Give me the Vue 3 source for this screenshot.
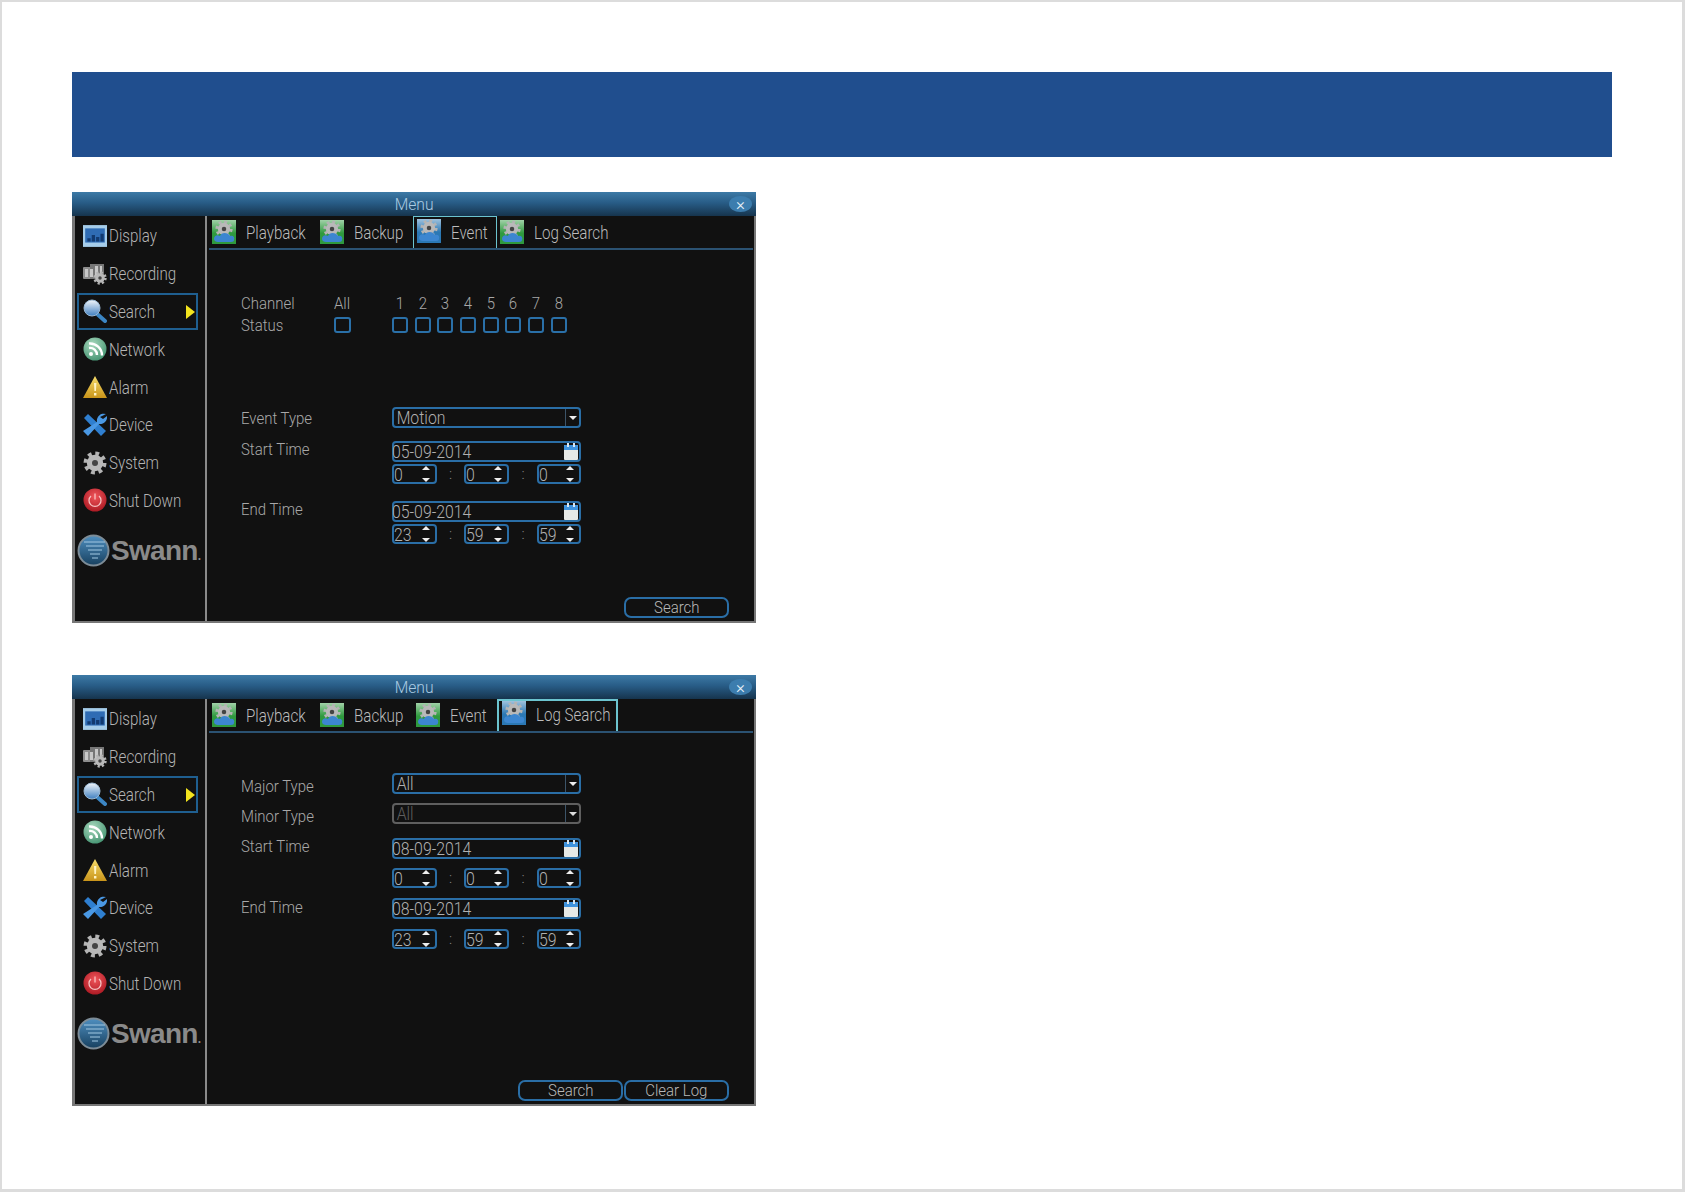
<template>
  <div class="page">
    <!-- shared icons -->
    <svg class="defs" width="0" height="0">
      <defs>
        <linearGradient id="g-lens" x1="0" y1="0" x2="0" y2="1"><stop offset="0" stop-color="#f2f6fa" /><stop offset="1" stop-color="#3f7fc0" /></linearGradient>
        <linearGradient id="g-warn" x1="0" y1="0" x2="0" y2="1"><stop offset="0" stop-color="#f6dc6a" /><stop offset="1" stop-color="#c9941a" /></linearGradient>
        <radialGradient id="g-red" cx="0.5" cy="0.35" r="0.7"><stop offset="0" stop-color="#f0555a" /><stop offset="1" stop-color="#a81620" /></radialGradient>
        <radialGradient id="g-green" cx="0.4" cy="0.3" r="0.8"><stop offset="0" stop-color="#a8d8bd" /><stop offset="1" stop-color="#3d8f6c" /></radialGradient>
        <linearGradient id="g-swann" x1="0" y1="0" x2="0" y2="1"><stop offset="0" stop-color="#4f8fc0" /><stop offset="1" stop-color="#17405f" /></linearGradient>
        <linearGradient id="g-shade" x1="0" y1="0" x2="0" y2="1"><stop offset="0" stop-color="#fff" stop-opacity="0.55" /><stop offset="0.55" stop-color="#fff" stop-opacity="0" /></linearGradient>
      </defs>
      <symbol id="ic-gear" viewBox="0 0 24 24">
        <circle cx="12" cy="12" r="9" fill="none" stroke="#b4b4b4" stroke-width="5" stroke-dasharray="3.6 3.47" />
        <circle cx="12" cy="12" r="8.200" fill="#b9b9b9" />
        <circle cx="12" cy="12" r="3" fill="#444" />
      </symbol>
      <symbol id="ic-tab" viewBox="0 0 24 24">
        <rect width="24" height="24" fill="currentColor" />
        <rect width="24" height="24" fill="url(#g-shade)" />
        <use href="#ic-gear" x="3" y="0" width="18" height="18" />
        <path d="M2 19c0-3 3-5 6-3 1-4 8-4 10 0 3-1 5 1 4 4 0 1-1 2-3 2H6c-2 0-4-1-4-3z" fill="#3c86d0" />
      </symbol>
      <symbol id="ic-display" viewBox="0 0 22 20">
        <rect width="22" height="20" fill="#a6cdea" />
        <rect x="2" y="3" width="18" height="13" fill="#2f6cb4" />
        <path d="M4 15v-3h3v3zM8 15v-6h3v6zM12 15v-4h3v4zM16 15V8h3v7z" fill="#123a70" />
      </symbol>
      <symbol id="ic-recording" viewBox="0 0 24 22">
        <rect y="4" width="17" height="12" rx="1" fill="#8d8d8d" />
        <rect x="7" y="1" width="14" height="15" fill="#777" />
        <path d="M2 6h3v8H2zM7 6h3v8H7zM12 3h3v11h-3zM17 3h2v10h-2z" fill="#c8c8c8" />
        <use href="#ic-gear" x="10" y="8" width="14" height="14" />
      </symbol>
      <symbol id="ic-search" viewBox="0 0 24 24">
        <path d="M13 14l9 8" stroke="#3c86c4" stroke-width="4" stroke-linecap="round" />
        <circle cx="9" cy="9" r="8" fill="url(#g-lens)" stroke="#9bb9d4" />
      </symbol>
      <symbol id="ic-network" viewBox="0 0 24 24">
        <circle cx="12" cy="12" r="11.500" fill="url(#g-green)" />
        <circle cx="8" cy="17" r="2" fill="#fff" />
        <path d="M6 11a7 7 0 0 1 8 7M6 6.500a12 12 0 0 1 13 12" fill="none" stroke="#fff" stroke-width="2.400" />
      </symbol>
      <symbol id="ic-alarm" viewBox="0 0 24 22">
        <path d="M12 0L24 22H0z" fill="url(#g-warn)" />
        <path d="M11 7h2.400l-.4 8h-1.600zM11 17h2.400v2.400H11z" fill="#fff3c4" />
      </symbol>
      <symbol id="ic-device" viewBox="0 0 24 24">
        <path d="M1 5l4-4 18 17-5 5z" fill="#2f7fd0" />
        <path d="M23 1a7 7 0 0 0-9 8L0 18l5 5 11-12a7 7 0 0 0 8-8l-4 3-3-2z" fill="#4a98e4" />
      </symbol>
      <symbol id="ic-power" viewBox="0 0 24 24">
        <circle cx="12" cy="12" r="11.500" fill="url(#g-red)" />
        <path d="M8 8a6 6 0 1 0 8 0M12 5.500v6" fill="none" stroke="#f7c1c1" stroke-width="1.300" />
      </symbol>
      <symbol id="ic-swann" viewBox="0 0 33 33">
        <circle cx="16.500" cy="16.500" r="15" fill="url(#g-swann)" stroke="#7d8c97" stroke-width="2" />
        <path d="M7 8h21M9 12h18M11 16h14M13 20h10M15 24h6" stroke="#9cc4de" stroke-width="1.500" opacity="0.7" />
      </symbol>
      <symbol id="ic-cal" viewBox="0 0 14 17">
        <rect y="2" width="14" height="15" rx="1" fill="#e6e9e6" />
        <path d="M0 3a1 1 0 0 1 1-1h12a1 1 0 0 1 1 1v4H0z" fill="#3f93dd" />
        <path d="M3 0h2v4H3zM9 0h2v4H9z" fill="#d9e6f0" />
      </symbol>
    </svg>

    <div class="banner"></div>

    <section v-for="panel in panels" :key="panel.active" class="panel">
      <header class="titlebar">
        <span class="title">Menu</span>
        <span class="close">×</span>
      </header>
      <div class="body">
        <aside class="sidebar">
          <div v-for="item in menu" :key="item.name" class="menu-item" :class="{ current: item.name === 'Search' }">
            <svg class="menu-icon"><use :href="'#ic-' + item.icon" /></svg>
            <span>{{ item.name }}</span>
            <i v-if="item.name === 'Search'" class="pointer"></i>
          </div>
          <div class="logo">
            <svg class="logo-mark"><use href="#ic-swann" /></svg>
            <span>Swann<small>.</small></span>
          </div>
        </aside>

        <main class="content">
          <nav class="tabs">
            <div v-for="tab in tabs" :key="tab" class="tab" :class="{ active: tab === panel.active, wide: tab === panel.active && tab === 'Log Search' }">
              <svg class="tab-icon"><use href="#ic-tab" /></svg>
              <span>{{ tab }}</span>
            </div>
          </nav>

          <div v-if="panel.channels" class="channels">
            <span>Channel</span><span>All</span><span></span>
            <span v-for="n in 8" :key="n" class="num">{{ n }}</span>
            <span>Status</span><i class="check"></i><span></span>
            <i v-for="n in 8" :key="n" class="check"></i>
          </div>

          <div class="form" :class="{ 'form-log': !panel.channels }">
            <div v-for="(row, i) in panel.rows" :key="i" class="row" :class="row.kind" :style="{ marginTop: row.gap + 'px' }">
              <label v-if="row.label" :style="{ top: (row.nudge || 0) + 'px' }">{{ row.label }}</label>

              <div v-if="row.kind === 'select'" class="field select" :class="{ disabled: row.disabled }">
                <span>{{ row.value }}</span>
                <b class="drop"><i class="tri-down"></i></b>
              </div>

              <div v-else-if="row.kind === 'date'" class="field date">
                <span>{{ row.value }}</span>
                <svg class="cal"><use href="#ic-cal" /></svg>
              </div>

              <div v-else class="clock">
                <template v-for="(v, j) in row.value" :key="j">
                  <span v-if="j" class="colon">:</span>
                  <div class="field spin">
                    <span>{{ v }}</span>
                    <b class="arrows"><i class="tri-up"></i><i class="tri-down"></i></b>
                  </div>
                </template>
              </div>
            </div>
          </div>

          <footer class="actions">
            <button v-for="b in panel.buttons" :key="b"><span>{{ b }}</span></button>
          </footer>
        </main>
      </div>
    </section>

    <i class="edge-mark m1"></i>
    <i class="edge-mark m2"></i>
  </div>
</template>

<script setup>
const menu = [
  { name: 'Display', icon: 'display' },
  { name: 'Recording', icon: 'recording' },
  { name: 'Search', icon: 'search' },
  { name: 'Network', icon: 'network' },
  { name: 'Alarm', icon: 'alarm' },
  { name: 'Device', icon: 'device' },
  { name: 'System', icon: 'gear' },
  { name: 'Shut Down', icon: 'power' },
]

const tabs = ['Playback', 'Backup', 'Event', 'Log Search']

const panels = [
  {
    active: 'Event',
    channels: true,
    buttons: ['Search'],
    rows: [
      { label: 'Event Type', kind: 'select', value: 'Motion', gap: 0 },
      { label: 'Start Time', kind: 'date', value: '05-09-2014', gap: 13, nudge: -3 },
      { kind: 'time', value: ['0', '0', '0'], gap: 2 },
      { label: 'End Time', kind: 'date', value: '05-09-2014', gap: 17, nudge: -3 },
      { kind: 'time', value: ['23', '59', '59'], gap: 2 },
    ],
  },
  {
    active: 'Log Search',
    channels: false,
    buttons: ['Search', 'Clear Log'],
    rows: [
      { label: 'Major Type', kind: 'select', value: 'All', gap: 0, nudge: 2 },
      { label: 'Minor Type', kind: 'select', value: 'All', gap: 9, disabled: true, nudge: 2 },
      { label: 'Start Time', kind: 'date', value: '08-09-2014', gap: 14, nudge: -3 },
      { kind: 'time', value: ['0', '0', '0'], gap: 9 },
      { label: 'End Time', kind: 'date', value: '08-09-2014', gap: 10, nudge: -2 },
      { kind: 'time', value: ['23', '59', '59'], gap: 10 },
    ],
  },
]
</script>

<style>
html, body { margin: 0; background: #fff; }
</style>

<style scoped>
.page {
  position: relative;
  box-sizing: border-box;
  width: 1685px;
  height: 1192px;
  padding: 70px 70px 0;
  border-style: solid;
  border-color: #dcdcdc;
  border-width: 2px 3px 3px 2px;
  background: #fff;
  overflow: hidden;
  font-family: Roboto, "Liberation Sans", sans-serif;
  font-weight: 300;
}
.defs { position: absolute; }

.banner {
  width: 1540px;
  height: 85px;
  background: #204e8e;
  margin-bottom: 35px;
}

.panel {
  width: 684px;
  height: 431px;
  margin-bottom: 52px;
  display: flex;
  flex-direction: column;
  background: #111;
}
.titlebar {
  flex: 0 0 24px;
  position: relative;
  display: flex;
  align-items: center;
  justify-content: center;
  background: linear-gradient(#3d7aa6, #285c86 45%, #16344d);
}
.title { color: #a9cbe2; font-size: 17px; transform: scaleX(0.92); }
.close {
  position: absolute;
  right: 4px;
  top: 4px;
  width: 23px;
  height: 16px;
  border-radius: 50%;
  background: #3c7dae;
  color: #e8f2f8;
  font-size: 17px;
  line-height: 16px;
  text-align: center;
}

.body {
  flex: 1;
  display: flex;
  min-height: 0;
  border-style: solid;
  border-color: #777;
  border-width: 0 2px 2px 3px;
}

.sidebar {
  flex: 0 0 132px;
  box-sizing: border-box;
  padding: 1px 0 0 2px;
  border-right: 2px solid #8a8a8a;
}
.menu-item {
  box-sizing: border-box;
  height: 37.8px;
  width: 121px;
  display: flex;
  align-items: center;
  padding-left: 6px;
  color: #b4b4b4;
  font-size: 18px;
  position: relative;
}
.menu-item span { transform: scaleX(0.84); transform-origin: left; white-space: nowrap; }
.menu-item.current {
  outline: 2px solid #1f5f90;
  outline-offset: -2px;
}
.menu-icon { flex: 0 0 24px; width: 24px; height: 24px; margin-right: 2px; }
.pointer {
  position: absolute;
  right: 3px;
  top: 12px;
  border-left: 9px solid #f3e41e;
  border-top: 7px solid transparent;
  border-bottom: 7px solid transparent;
}
.logo {
  display: flex;
  align-items: center;
  margin: 15px 0 0 0;
  color: #8a8a8a;
  font-family: "Liberation Sans", sans-serif;
  font-weight: 700;
  font-size: 28px;
  letter-spacing: -0.7px;
}
.logo small { font-size: 12px; letter-spacing: 0; }
.logo-mark { width: 33px; height: 33px; flex: none; margin-right: 1px; }

.content {
  flex: 1;
  display: flex;
  flex-direction: column;
  min-width: 0;
}

.tabs {
  flex: 0 0 32px;
  box-sizing: border-box;
  display: grid;
  grid-template-columns: 108px 96px 84px 121px;
  margin: 0 1px 2px 2px;
  border-bottom: 2px solid #2b5272;
}
.tab {
  display: flex;
  align-items: flex-start;
  height: 30px;
  padding: 4px 0 0 3px;
  color: #bdbdbd;
  font-size: 18px;
  line-height: 28px;
  box-sizing: border-box;
}
.tab span { transform: scaleX(0.84); transform-origin: left; white-space: nowrap; margin-top: -1px; }
.tab-icon {
  flex: none;
  width: 24px;
  height: 24px;
  margin-right: 10px;
  color: #2f9a3e;
}
.tab.active {
  border: solid #6cc4cf;
  border-width: 1px 1px 0;
  height: 32px;
  background: #111;
  padding: 2px 0 0 3px;
}
.tab.active.wide { border-width: 2px 2px 0; padding-top: 0; }
.tab.active span { margin-top: 0; }
.tab.active .tab-icon { color: #2b78b4; }

.channels {
  display: grid;
  grid-template-columns: 93px 18px 40px repeat(8, 22.7px);
  grid-template-rows: 22px 22px;
  align-items: center;
  margin: 40px 0 0 34px;
  color: #a8a8a8;
  font-size: 17px;
}
.channels span { transform: scaleX(0.88); transform-origin: left; }
.channels .num { width: 16px; text-align: center; transform-origin: center; }
.check {
  display: block;
  box-sizing: border-box;
  width: 16px;
  height: 16px;
  border: 2px solid #2a70a8;
  border-radius: 3px;
}
.channels > .check:first-of-type { width: 17px; }

.form { margin: 71px 0 0 34px; }
.form-log { margin-top: 38px; }
.row {
  display: grid;
  grid-template-columns: 151px 189px;
  align-items: center;
  height: 21px;
}
.row.time { height: 20px; }
.row label {
  position: relative;
  color: #a8a8a8;
  font-size: 17px;
  white-space: nowrap;
  transform: scaleX(0.88);
  transform-origin: left;
}

.field {
  position: relative;
  box-sizing: border-box;
  height: 21px;
  border: 2px solid #2a6ea6;
  border-radius: 4px;
  display: flex;
  align-items: center;
  justify-content: space-between;
  color: #b0b0b0;
  font-size: 18px;
  line-height: 17px;
}
.field span { transform: scaleX(0.88); transform-origin: left; }
.select, .date { grid-column: 2; }
.select span { padding-left: 3px; }
.drop {
  align-self: stretch;
  width: 13px;
  border-left: 1px solid #3c5468;
  display: flex;
  align-items: center;
  justify-content: center;
}
.select.disabled { border-color: #5f5f5f; color: #5f5f5f; }
.select.disabled .tri-down { border-top-color: #ddd; }
.date span { margin-left: -2px; }
.cal { width: 14px; height: 17px; margin-right: 1px; }

.clock {
  grid-column: 2;
  display: grid;
  grid-template-columns: 45px 27px 45px 28px 44px;
  align-items: center;
}
.clock .field { height: 20px; }
.colon { text-align: center; color: #8a8a8a; font-size: 15px; }
.arrows {
  display: flex;
  flex-direction: column;
  justify-content: space-between;
  align-self: stretch;
  margin: 0 5px 0 0;
}
.tri-up, .tri-down {
  display: block;
  width: 0;
  height: 0;
  border-left: 4px solid transparent;
  border-right: 4px solid transparent;
}
.tri-up { border-bottom: 4px solid #eee; }
.tri-down { border-top: 4px solid #eee; }

.actions {
  margin-top: auto;
  display: flex;
  justify-content: flex-end;
  gap: 1px;
  padding: 0 25px 3px 0;
}
button {
  box-sizing: border-box;
  width: 105px;
  height: 21px;
  padding: 0;
  background: #111;
  border: 2px solid #2a6ea6;
  border-radius: 7px;
  color: #b8b8b8;
  font-family: inherit;
  font-weight: 300;
  font-size: 17px;
  line-height: 17px;
}
button span { display: inline-block; transform: scaleX(0.88); }

.edge-mark {
  position: absolute;
  bottom: -3px;
  height: 1px;
  background: #111;
}
.m1 { left: -2px; width: 30px; }
.m2 { left: 34px; width: 37px; }
</style>
